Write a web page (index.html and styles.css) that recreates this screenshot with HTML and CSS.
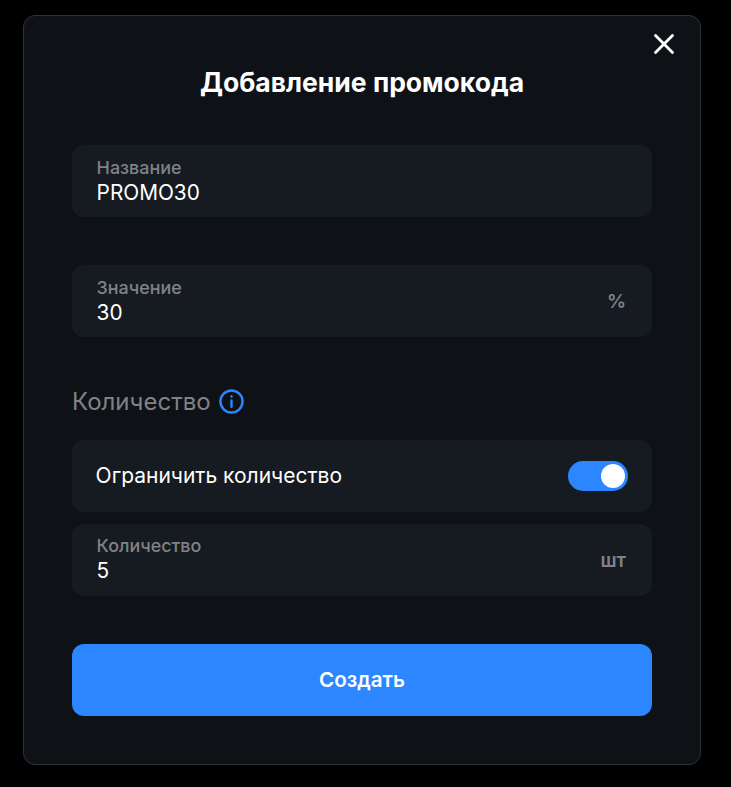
FILE: index.html
```html
<!DOCTYPE html>
<html lang="ru">
<head>
  <meta charset="UTF-8">
  <meta name="viewport" content="width=device-width, initial-scale=1.0">
  <title>Добавление промокода</title>
  <link rel="stylesheet" href="styles.css">
</head>
<body>
  <div class="modal">
    <button class="close" aria-label="Закрыть">
      <svg width="24" height="24" viewBox="0 0 24 24" fill="none" stroke="#fff" stroke-width="2.8" stroke-linecap="round">
        <path d="M3.5 3.5 20.5 20.5M20.5 3.5 3.5 20.5"/>
      </svg>
    </button>

    <h1 class="title">Добавление промокода</h1>

    <div class="field">
      <div class="field-text">
        <span class="field-label">Название</span>
        <span class="field-value">PROMO30</span>
      </div>
    </div>

    <div class="field field-second">
      <div class="field-text">
        <span class="field-label">Значение</span>
        <span class="field-value">30</span>
      </div>
      <span class="field-unit">%</span>
    </div>

    <div class="section-title">
      <span>Количество</span>
      <svg width="25" height="25" viewBox="0 0 26 26" fill="none" stroke="#2b86ff" stroke-width="2.5" stroke-linecap="round">
        <circle cx="13" cy="13" r="11.5"/>
        <path d="M13 12v6.5M13 7.6v.2"/>
      </svg>
    </div>

    <div class="toggle-row">
      <span>Ограничить количество</span>
      <span class="toggle"><span class="toggle-knob"></span></span>
    </div>

    <div class="field field-count">
      <div class="field-text">
        <span class="field-label">Количество</span>
        <span class="field-value">5</span>
      </div>
      <span class="field-unit">шт</span>
    </div>

    <button class="submit">Создать</button>
  </div>
</body>
</html>
```

FILE: styles.css
```css
body {
  background: #000;
  font-family: Inter, 'Liberation Sans', sans-serif;
  margin: 0;
  height: 787px;
  overflow: hidden;
}

.modal {
  position: relative;
  box-sizing: border-box;
  width: 678px;
  height: 750px;
  margin: 15px 0 0 23px;
  padding: 0 48px;
  background: #0e1216;
  border: 1px solid #2f3235;
  border-radius: 12px;
}

.close {
  position: absolute;
  top: 16px;
  right: 24px;
  width: 24px;
  height: 24px;
  padding: 0;
  background: none;
  border: none;
  cursor: pointer;
}

.title {
  margin: 48px 0 0;
  height: 81px;
  color: #fff;
  font-size: 26.5px;
  line-height: 36px;
  font-weight: 700;
  text-align: center;
}

.field {
  display: flex;
  justify-content: space-between;
  align-items: center;
  box-sizing: border-box;
  height: 72px;
  padding: 0 26px 0 24.6px;
  background: #161b22;
  border-radius: 12px;
}

.field-second {
  margin-top: 48px;
}

.field-count {
  margin-top: 12px;
}

.field-text {
  display: flex;
  flex-direction: column;
  padding-top: 1px;
}

.field-label {
  color: #808286;
  font-size: 17.9px;
  line-height: 22px;
  font-weight: 500;
}

.field-value {
  color: #fff;
  font-size: 20.8px;
  line-height: 28px;
}

.field-unit {
  color: #808286;
  font-size: 19px;
  line-height: 26px;
  font-weight: 600;
  padding-top: 2px;
}

.section-title {
  display: flex;
  align-items: center;
  gap: 8px;
  height: 40px;
  margin-top: 44px;
  margin-bottom: 18.5px;
  color: #808286;
  font-size: 24px;
}

.toggle-row {
  display: flex;
  justify-content: space-between;
  align-items: center;
  box-sizing: border-box;
  height: 72px;
  padding: 0 24px 0 23.6px;
  background: #161b22;
  border-radius: 12px;
  color: #fff;
  font-size: 21px;
}

.toggle {
  display: flex;
  justify-content: flex-end;
  align-items: center;
  box-sizing: border-box;
  width: 60px;
  height: 30px;
  padding: 0 3px;
  background: #2b86ff;
  border-radius: 15px;
}

.toggle-knob {
  width: 24px;
  height: 24px;
  background: #fff;
  border-radius: 50%;
}

.submit {
  display: block;
  width: 100%;
  height: 72px;
  margin-top: 48px;
  background: #2b86ff;
  border: none;
  border-radius: 12px;
  color: #fff;
  font-family: inherit;
  font-size: 20.6px;
  font-weight: 600;
  cursor: pointer;
}
```
